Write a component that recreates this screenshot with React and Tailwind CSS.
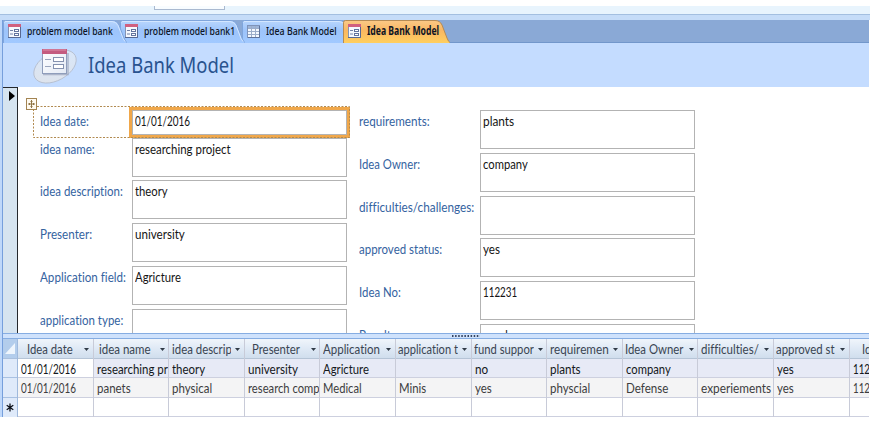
import { useLayoutEffect, useRef } from 'react';

// Single line of text condensed to a fixed advance width.
function T({ w, children, className = '' }) {
  const ref = useRef(null);
  useLayoutEffect(() => {
    const el = ref.current;
    el.style.transform = `scaleX(${w / el.offsetWidth})`;
  }, [w]);
  return (
    <span className="block shrink-0 overflow-visible" style={{ width: w }}>
      <span ref={ref} className={`inline-block origin-left whitespace-pre ${className}`}>
        {children}
      </span>
    </span>
  );
}

function FormIcon() {
  return (
    <svg width="13" height="14" viewBox="0 0 13 14" className="block shrink-0">
      <rect x="0.5" y="0.5" width="12" height="13" fill="#f5f8fd" stroke="#8594b4" />
      <rect x="0" y="0" width="13" height="3" fill="#d0607f" />
      <path d="M2 6.5h3M2 10h3" stroke="#7282a8" />
      <rect x="6.5" y="5.5" width="4" height="2" fill="#fff" stroke="#62739d" />
      <rect x="6.5" y="9.5" width="4" height="2" fill="#fff" stroke="#62739d" />
      <path d="M12.5 3v10.5H0" fill="none" stroke="#566893" />
    </svg>
  );
}

function TableIcon() {
  return (
    <svg width="13" height="13" viewBox="0 0 13 13" className="block shrink-0">
      <rect x="0.5" y="0.5" width="12" height="12" fill="#f4f8fe" stroke="#7f93b8" />
      <rect x="1" y="1" width="11" height="2" fill="#9db4d8" />
      <path d="M1 3.5h11M1 6.5h11M1 9.5h11M4.5 1v11M8.5 1v11" stroke="#9cadc9" />
      <path d="M12.5 1v11.5H1" fill="none" stroke="#5f7299" />
    </svg>
  );
}

function LogoIcon() {
  return (
    <svg width="46" height="38" viewBox="0 0 46 38" className="block shrink-0">
      <defs>
        <linearGradient id="disc" x1="0" y1="1" x2="1" y2="0">
          <stop offset="0" stopColor="#dfe3ea" />
          <stop offset="1" stopColor="#d7e7fb" />
        </linearGradient>
        <linearGradient id="sheet" x1="0" y1="0" x2="1" y2="1">
          <stop offset="0" stopColor="#ffffff" />
          <stop offset="1" stopColor="#e4eaf5" />
        </linearGradient>
      </defs>
      <ellipse cx="22" cy="20.5" rx="23" ry="14" transform="rotate(-29 22 20.5)" fill="url(#disc)" stroke="#b4bccb" strokeWidth="0.8" />
      <path d="M10 28.5h25V7" fill="none" stroke="#98a3bb" strokeWidth="1.5" opacity="0.7" />
      <rect x="9.5" y="3.5" width="24" height="24" fill="url(#sheet)" stroke="#8f9dbb" />
      <rect x="9" y="3" width="25" height="5" fill="#c45c80" />
      <path d="M10 4h23" stroke="#dc8fa9" />
      <path d="M12 13.5h6M12 20.5h6" stroke="#9aa5bc" />
      <rect x="20.5" y="11.5" width="10" height="4" fill="#fff" stroke="#8592b0" />
      <rect x="20.5" y="18.5" width="10" height="4" fill="#fff" stroke="#8592b0" />
    </svg>
  );
}

function Tab({ size, text, w, icon, active, className }) {
  const fill = active ? 'url(#tabOn)' : 'url(#tabOff)';
  return (
    <div className={`relative h-[23px] shrink-0 ${className}`} style={{ width: size }}>
      <svg width={size} height="23" className="absolute inset-0 block">
        <defs>
          <linearGradient id="tabOn" x1="0" y1="0" x2="0" y2="1">
            <stop offset="0" stopColor="#fbc987" />
            <stop offset="0.45" stopColor="#f9b762" />
            <stop offset="1" stopColor="#ffcf5f" />
          </linearGradient>
          <linearGradient id="tabOff" x1="0" y1="0" x2="0" y2="1">
            <stop offset="0" stopColor="#b9d6fd" />
            <stop offset="0.45" stopColor="#9dc4fb" />
            <stop offset="1" stopColor="#a1c9ff" />
          </linearGradient>
        </defs>
        <path
          d={`M0.5 23V2.5Q0.5 0.5 2.5 0.5H${size - 15}Q${size - 10} 0.5 ${size - 8} 5L${size - 3} 18Q${size - 1.5} 22 ${size} 22.5V23Z`}
          fill={fill}
        />
        <path
          d={`M0.5 23V2.5Q0.5 0.5 2.5 0.5H${size - 15}Q${size - 10} 0.5 ${size - 8} 5L${size - 3} 18Q${size - 1.5} 22 ${size} 22.5`}
          fill="none"
          stroke={active ? '#b58b55' : '#7fa5dc'}
        />
        {!active && (
          <path d={`M1.5 2.5Q1.5 1.5 3 1.5H${size - 15}Q${size - 11} 1.5 ${size - 9} 5.5L${size - 4} 18.5L${size - 2} 21.5`} fill="none" stroke="#d3e6ff" />
        )}
      </svg>
      <div className="relative flex h-[22px] items-center gap-[6px] pl-[5px]">
        {icon}
        <T w={w} className={`font-['Noto_Sans',sans-serif] text-[11.5px] leading-[22px] text-[#0c1424] ${active ? 'font-bold' : 'font-medium'}`}>
          {text}
        </T>
      </div>
    </div>
  );
}

const left = [
  ['idea name:', 55, 'researching project', 96],
  ['idea description:', 83, 'theory', 33],
  ['Presenter:', 52, 'university', 50],
  ['Application field:', 86, 'Agricture', 46],
  ['application type:', 83, '', 0],
];
const right = [
  ['requirements:', 71, 'plants', 31],
  ['Idea Owner:', 61, 'company', 45],
  ['difficulties/challenges:', 115, '', 0],
  ['approved status:', 83, 'yes', 17],
  ['Idea No:', 42, '112231', 34],
  ['Results:', 40, 'good', 25],
];

function Field({ row, labelClass }) {
  const [label, lw, value, vw] = row;
  return (
    <div className="flex h-[42.8px] shrink-0">
      <div className={`shrink-0 pt-[2px] text-[#35639f] ${labelClass}`}>
        <T w={lw} className="leading-[18px]">{label}</T>
      </div>
      <div className="h-[39px] w-[215px] border border-[#b3b3b3] bg-white pl-[2px] pt-[1px] text-[#151515]">
        {value && <T w={vw} className="leading-[18px]">{value}</T>}
      </div>
    </div>
  );
}

// heading, heading width, heading indent, row 1, width, row 2, width
const columns = [
  ['Idea date', 46, 8.5, '01/01/2016', 55, '01/01/2016', 55],
  ['idea name', 52, 5.5, 'researching pr', 71, 'panets', 34],
  ['idea descrip', 60, 3, 'theory', 33, 'physical', 40],
  ['Presenter', 48, 7.5, 'university', 50, 'research comp', 71.5],
  ['Application', 57, 2.5, 'Agricture', 46, 'Medical', 39],
  ['application t', 60, 2.5, '', 0, 'Minis', 27],
  ['fund suppor', 60, 2.5, 'no', 13, 'yes', 17],
  ['requiremen', 59, 2.5, 'plants', 31, 'physcial', 40],
  ['Idea Owner', 58, 2.5, 'company', 45, 'Defense', 42],
  ['difficulties/', 58, 2.5, '', 0, 'experiements', 70],
  ['approved st', 59, 2.5, 'yes', 17, 'yes', 17],
  ['Idea No', 38, 12, '112231', 34, '112231', 34],
];

function Column({ col, first }) {
  const [head, hw, indent, a, aw, b, bw] = col;
  return (
    <div className="w-[75.6px] shrink-0 overflow-hidden border-r border-[#c8cbd8]">
      <div className="flex h-[20px] border-b border-[#b5c4d6] bg-linear-to-b from-[#f0f5fb] via-[#dfe9f5] to-[#d0deed] text-[#3a4552]">
        <div className="w-[62px] shrink-0 overflow-hidden" style={{ paddingLeft: indent }}>
          <T w={hw} className="leading-[20px]">{head}</T>
        </div>
        <svg width="5" height="3" className="mt-[9px] ml-[4px] block shrink-0">
          <path d="M0 0h5L2.5 3z" fill="#303a46" />
        </svg>
      </div>
      <div className={`h-[19px] border-b border-[#cdd0df] pl-[3px] text-[#141820] ${first ? 'bg-white' : 'bg-[#e7eaf6]'}`}>
        {a && <T w={aw} className="leading-[20px]">{a}</T>}
      </div>
      <div className="h-[20px] border-b border-[#cdd0df] bg-[#f4f4f5] pl-[3px] text-[#3d3d40]">
        {b && <T w={bw} className="leading-[20px]">{b}</T>}
      </div>
      <div className="h-[19px] border-b border-[#cdd0df] bg-white" />
    </div>
  );
}

export default function App() {
  return (
    <div className="flex h-[428px] w-[870px] flex-col overflow-hidden bg-white pt-[6px] font-[Lato,sans-serif] text-[13px] [font-variant-ligatures:none]">
      <div className="flex h-[9px] shrink-0 border-b border-[#a3bfe0] bg-[#e8f4fd] pl-[154px]">
        <div className="h-[4px] w-[71px] border-x border-b border-[#a9b9d0] bg-[#f8fcff]" />
      </div>
      <div className="h-[5px] shrink-0 bg-[#c5dcf8]" />
      <div className="flex h-[397px] w-[869px] shrink-0 overflow-hidden">
        <div className="w-[3px] shrink-0 border-r border-[#769fdc] bg-[#bfd8fa]" />
        <div className="flex w-[866px] shrink-0 flex-col">
          <div className="flex h-[23px] shrink-0 border-b border-[#7297cb] bg-[#8aa9d6]">
            <Tab size={124} text="problem model bank" w={86} icon={<FormIcon />} className="z-30" />
            <Tab size={125} text="problem model bank1" w={91} icon={<FormIcon />} className="z-20 ml-[-7px]" />
            <Tab size={112} text="Idea Bank Model" w={71} icon={<TableIcon />} className="z-10 ml-[-3px]" />
            <Tab size={107} text="Idea Bank Model" w={72} icon={<FormIcon />} active className="z-40 ml-[-11px]" />
          </div>
          <div className="flex h-[44px] shrink-0 bg-[#c4dcff] pl-[30px] pt-[3px]">
            <LogoIcon />
            <div className="pl-[9px]">
              <T w={146} className="font-['Noto_Sans',sans-serif] text-[22px] leading-[36px] text-[#29538f]">Idea Bank Model</T>
            </div>
          </div>

          <div className="flex h-[246px] shrink-0 overflow-hidden">
            <div className="w-[15px] shrink-0 border-r border-t border-[#25282c] bg-[#d6e4f0] pl-[6px] pt-[3px]">
              <svg width="6" height="10" className="block">
                <path d="M0 0L6 5L0 10Z" fill="#000" />
              </svg>
            </div>
            <div className="relative flex flex-1 pt-[23px]">
              <div className="w-[329px] shrink-0">
                <div className="flex h-[27.6px]">
                  <div className="w-[114px] shrink-0 pl-[21.5px] pt-[2px] text-[#35639f]">
                    <T w={49} className="leading-[18px]">Idea date:</T>
                  </div>
                  <div className="h-[25px] w-[215px] border border-[#b3b3b3] bg-white pl-[2px] pt-[1px] text-[#151515] outline-3 outline-[#f0a74a]">
                    <T w={55} className="leading-[18px]">01/01/2016</T>
                  </div>
                </div>
                {left.map((row) => (
                  <Field key={row[0]} row={row} labelClass="w-[114px] pl-[21.5px]" />
                ))}
              </div>
              <div className="shrink-0 pl-[11.5px]">
                {right.map((row) => (
                  <Field key={row[0]} row={row} labelClass="w-[121.5px]" />
                ))}
              </div>
              {/* Selection outline and move handle float over the form */}
              <svg width="318" height="34" className="absolute left-[15px] top-[19px]">
                <rect x="0.5" y="0.5" width="316" height="31" fill="none" stroke="#b18a50" strokeDasharray="2 1.5" />
              </svg>
              <svg width="11" height="12" viewBox="0 0 11 12" className="absolute left-[8px] top-[11px]">
                <rect x="0.5" y="0.5" width="10" height="11" fill="#fffaf0" stroke="#a38452" />
                <path d="M5.5 2v8M2 6h7M4.5 3.5h2M4.5 8.5h2M3.5 5v2M7.5 5v2" stroke="#8f7445" fill="none" />
              </svg>
            </div>
          </div>

          <div className="flex h-[6px] shrink-0 items-center border-y border-[#86ade2] bg-[#cfe2fc] pl-[449px]">
            <svg width="28" height="3" className="block">
              <path d="M0 1h28" stroke="#34435f" strokeWidth="2" strokeDasharray="1.5 1.6" />
            </svg>
          </div>

          <div className="flex h-[79px] shrink-0 overflow-hidden text-[13.5px]">
            <div className="w-[15px] shrink-0 border-r border-[#9fb9dc] bg-[#dfeafa]">
              <div className="flex h-[20px] items-center justify-end border-b border-[#a9bfdd] bg-[#b3cdec] pr-[2px]">
                <svg width="10" height="11" className="block">
                  <path d="M10 0V11H0Z" fill="#eef5fd" />
                </svg>
              </div>
              <div className="h-[19px] border-b border-[#a9c1e2]" />
              <div className="h-[20px] border-b border-[#a9c1e2]" />
              <div className="flex h-[19px] items-center justify-center">
                <svg width="8" height="9" viewBox="0 0 8 9" className="block">
                  <path d="M4 0.5v8M0.7 2.2l6.6 4.6M7.3 2.2L0.7 6.8" stroke="#0b0f18" strokeWidth="1.3" />
                </svg>
              </div>
            </div>
            {columns.map((col, i) => (
              <Column key={col[0]} col={col} first={i === 0} />
            ))}
          </div>
        </div>
      </div>
    </div>
  );
}
